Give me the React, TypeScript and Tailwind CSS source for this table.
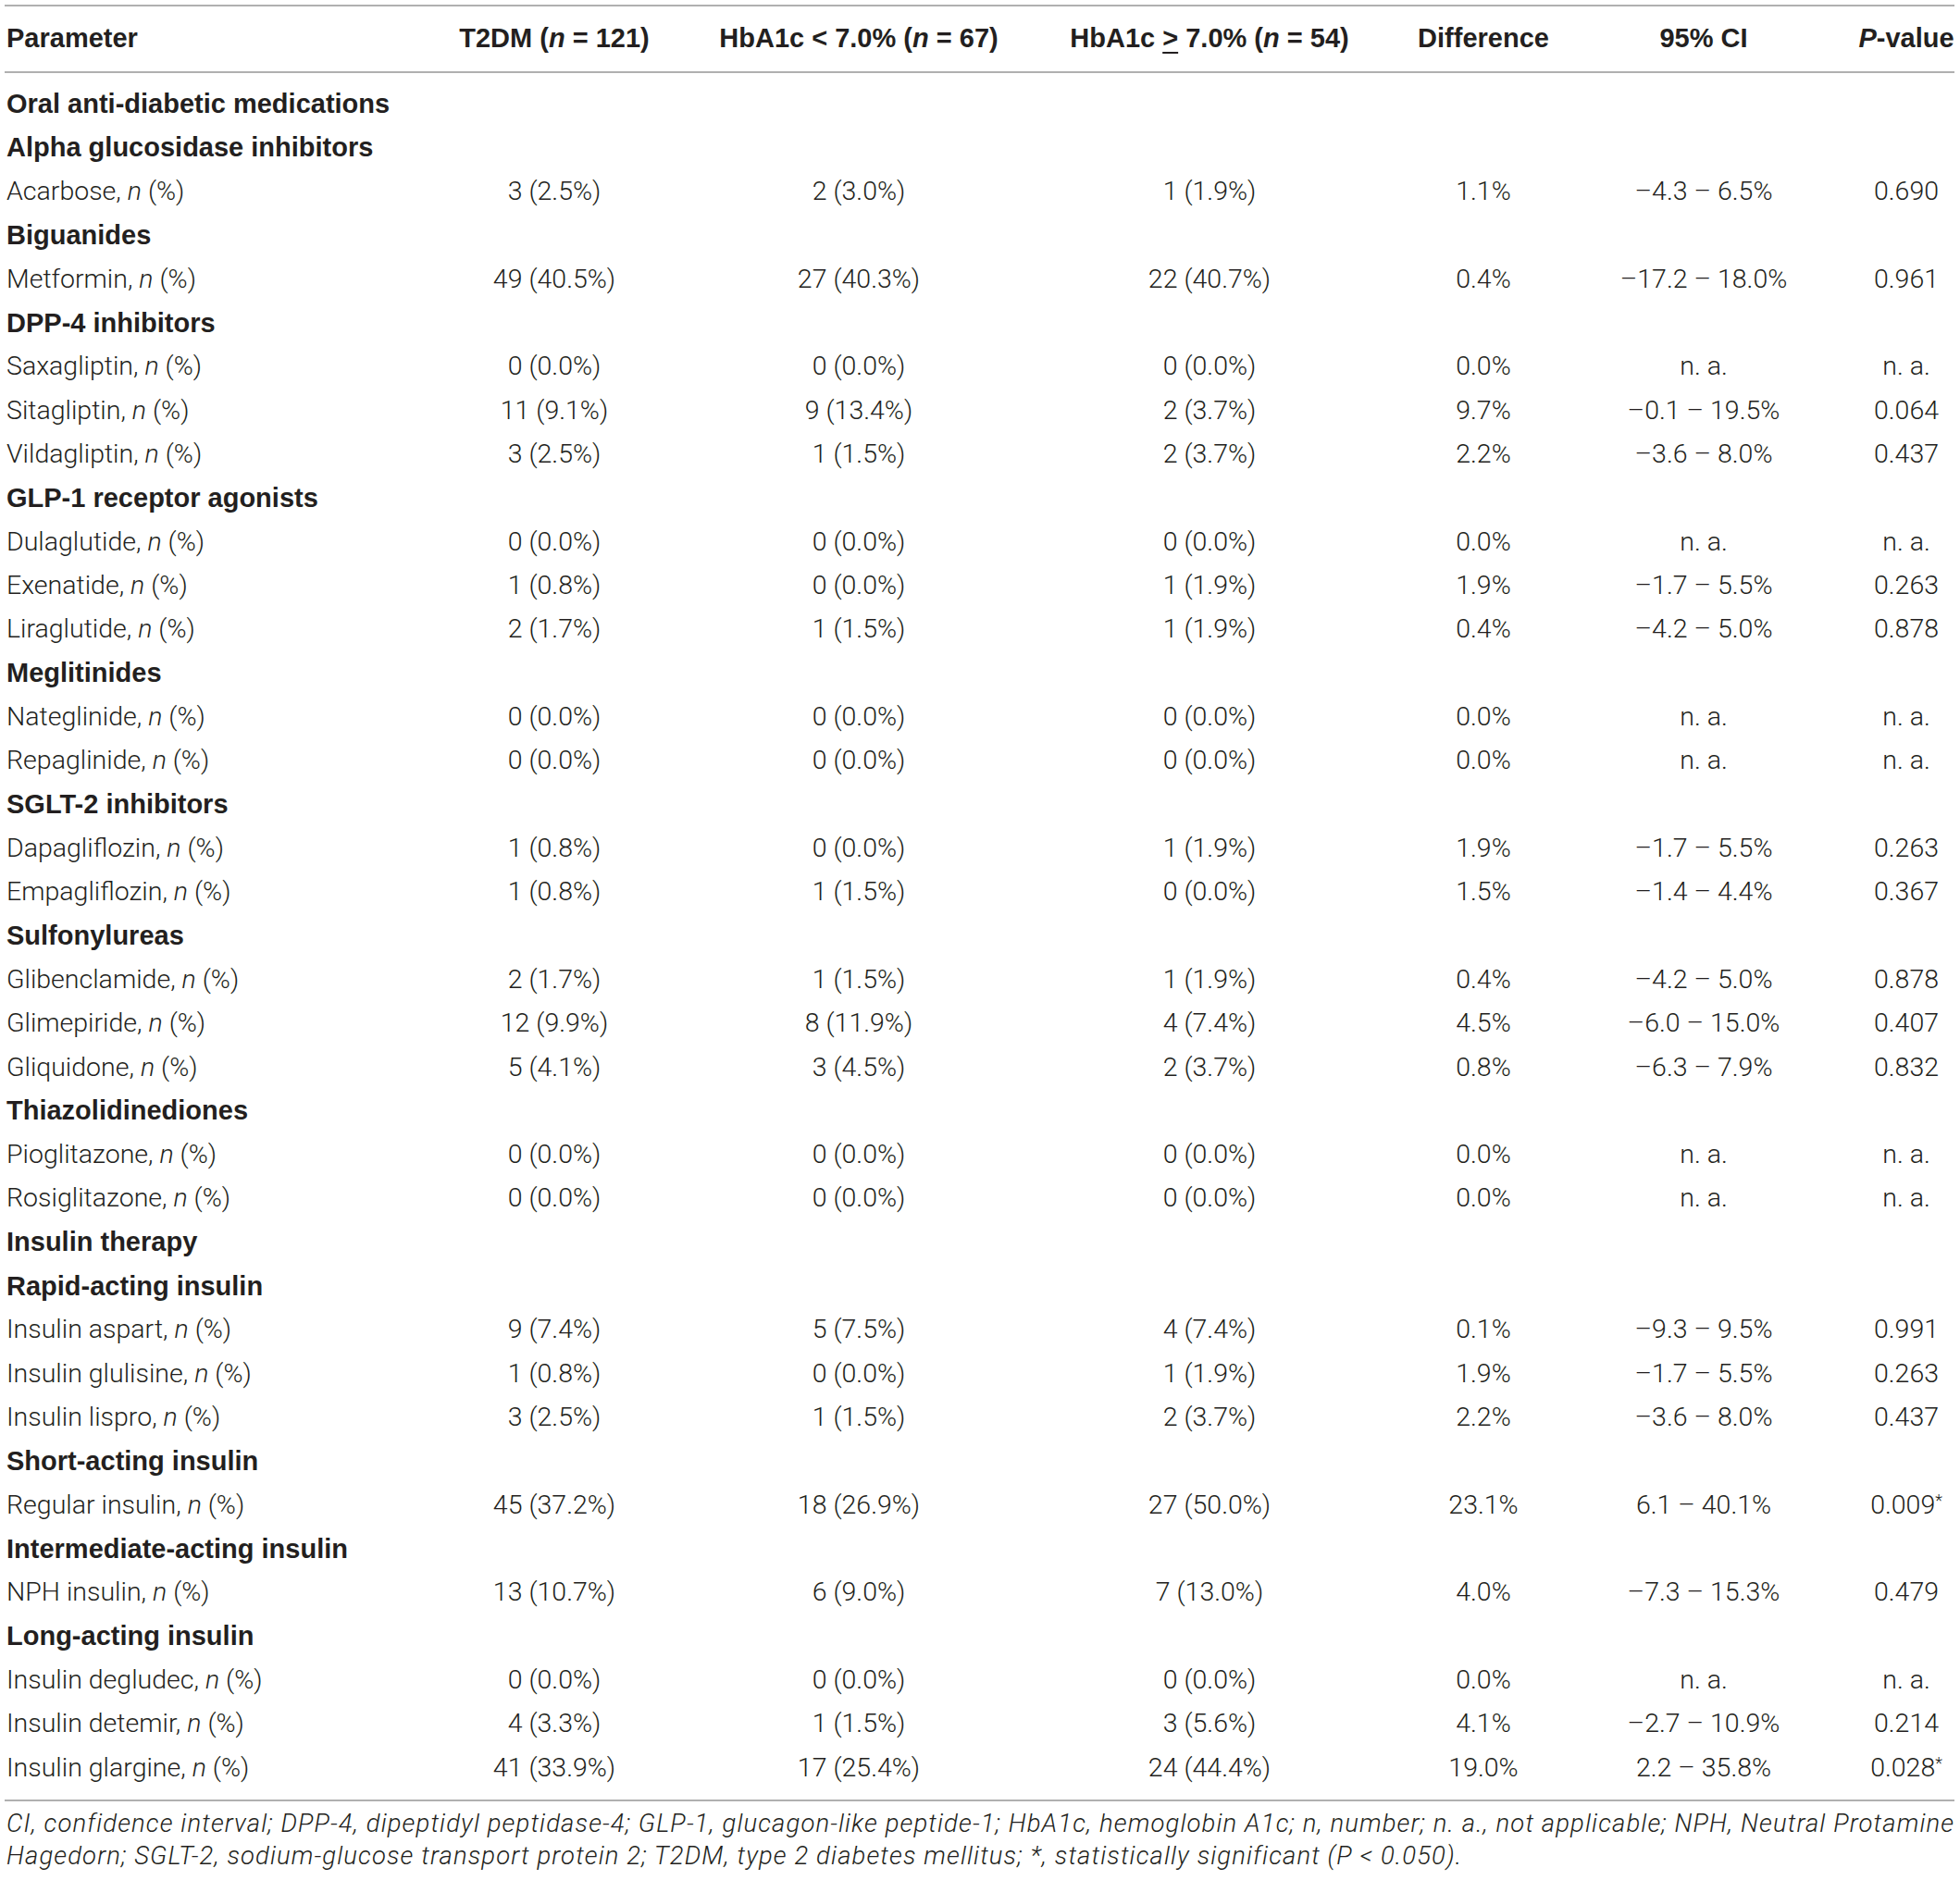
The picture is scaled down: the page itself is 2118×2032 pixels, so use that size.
import { Fragment } from "react";

type DataRow = {
  kind: "data";
  label: string;
  all: string;
  low: string;
  high: string;
  diff: string;
  ci: string;
  p: string;
  sig?: boolean;
};

type HeadRow = { kind: "head"; label: string };

type Row = DataRow | HeadRow;

const NA = { all: "0 (0.0%)", low: "0 (0.0%)", high: "0 (0.0%)", diff: "0.0%", ci: "n. a.", p: "n. a." };

const d = (label: string, all: string, low: string, high: string, diff: string, ci: string, p: string, sig = false): DataRow => ({
  kind: "data",
  label,
  all,
  low,
  high,
  diff,
  ci,
  p,
  sig,
});

const h = (label: string): HeadRow => ({ kind: "head", label });

const z = (label: string): DataRow => ({ kind: "data", label, ...NA });

const ROWS: Row[] = [
  h("Oral anti-diabetic medications"),
  h("Alpha glucosidase inhibitors"),
  d("Acarbose", "3 (2.5%)", "2 (3.0%)", "1 (1.9%)", "1.1%", "–4.3 – 6.5%", "0.690"),
  h("Biguanides"),
  d("Metformin", "49 (40.5%)", "27 (40.3%)", "22 (40.7%)", "0.4%", "–17.2 – 18.0%", "0.961"),
  h("DPP-4 inhibitors"),
  z("Saxagliptin"),
  d("Sitagliptin", "11 (9.1%)", "9 (13.4%)", "2 (3.7%)", "9.7%", "–0.1 – 19.5%", "0.064"),
  d("Vildagliptin", "3 (2.5%)", "1 (1.5%)", "2 (3.7%)", "2.2%", "–3.6 – 8.0%", "0.437"),
  h("GLP-1 receptor agonists"),
  z("Dulaglutide"),
  d("Exenatide", "1 (0.8%)", "0 (0.0%)", "1 (1.9%)", "1.9%", "–1.7 – 5.5%", "0.263"),
  d("Liraglutide", "2 (1.7%)", "1 (1.5%)", "1 (1.9%)", "0.4%", "–4.2 – 5.0%", "0.878"),
  h("Meglitinides"),
  z("Nateglinide"),
  z("Repaglinide"),
  h("SGLT-2 inhibitors"),
  d("Dapagliflozin", "1 (0.8%)", "0 (0.0%)", "1 (1.9%)", "1.9%", "–1.7 – 5.5%", "0.263"),
  d("Empagliflozin", "1 (0.8%)", "1 (1.5%)", "0 (0.0%)", "1.5%", "–1.4 – 4.4%", "0.367"),
  h("Sulfonylureas"),
  d("Glibenclamide", "2 (1.7%)", "1 (1.5%)", "1 (1.9%)", "0.4%", "–4.2 – 5.0%", "0.878"),
  d("Glimepiride", "12 (9.9%)", "8 (11.9%)", "4 (7.4%)", "4.5%", "–6.0 – 15.0%", "0.407"),
  d("Gliquidone", "5 (4.1%)", "3 (4.5%)", "2 (3.7%)", "0.8%", "–6.3 – 7.9%", "0.832"),
  h("Thiazolidinediones"),
  z("Pioglitazone"),
  z("Rosiglitazone"),
  h("Insulin therapy"),
  h("Rapid-acting insulin"),
  d("Insulin aspart", "9 (7.4%)", "5 (7.5%)", "4 (7.4%)", "0.1%", "–9.3 – 9.5%", "0.991"),
  d("Insulin glulisine", "1 (0.8%)", "0 (0.0%)", "1 (1.9%)", "1.9%", "–1.7 – 5.5%", "0.263"),
  d("Insulin lispro", "3 (2.5%)", "1 (1.5%)", "2 (3.7%)", "2.2%", "–3.6 – 8.0%", "0.437"),
  h("Short-acting insulin"),
  d("Regular insulin", "45 (37.2%)", "18 (26.9%)", "27 (50.0%)", "23.1%", "6.1 – 40.1%", "0.009", true),
  h("Intermediate-acting insulin"),
  d("NPH insulin", "13 (10.7%)", "6 (9.0%)", "7 (13.0%)", "4.0%", "–7.3 – 15.3%", "0.479"),
  h("Long-acting insulin"),
  z("Insulin degludec"),
  d("Insulin detemir", "4 (3.3%)", "1 (1.5%)", "3 (5.6%)", "4.1%", "–2.7 – 10.9%", "0.214"),
  d("Insulin glargine", "41 (33.9%)", "17 (25.4%)", "24 (44.4%)", "19.0%", "2.2 – 35.8%", "0.028", true),
];

const GRID = "grid grid-cols-[417px_280px_378px_380px_212px_264px_174px] pl-[2px]";
const NUM = "pl-[70px] text-center whitespace-nowrap";

export default function App() {
  return (
    <div className="min-h-screen bg-white text-[#231f20]">
      <div className="ml-[5px] w-[2107px] pt-[5px]">
        <div className="h-[2px] bg-[#b0b0b0]" />

        {/* header */}
        <div
          className={`${GRID} h-[70px] items-center text-[29px] font-bold`}
          style={{ fontFamily: '"Liberation Sans", Arial, sans-serif' }}
        >
          <div>Parameter</div>
          <div className={NUM}>
            T2DM (<i>n</i> = 121)
          </div>
          <div className={NUM}>
            HbA1c &lt; 7.0% (<i>n</i> = 67)
          </div>
          <div className={NUM}>
            HbA1c <span className="underline underline-offset-[5px] decoration-2">&gt;</span> 7.0% (<i>n</i> = 54)
          </div>
          <div className={NUM}>Difference</div>
          <div className={NUM}>95% CI</div>
          <div className={NUM}>
            <i>P</i>-value
          </div>
        </div>

        <div className="h-[2px] bg-[#b0b0b0]" />

        {/* body */}
        <div className="pt-[10px] pb-[10px]">
          {ROWS.map((row, i) =>
            row.kind === "head" ? (
              <div
                key={i}
                className={`${GRID} h-[47.33px] items-center text-[29px] font-bold whitespace-nowrap`}
                style={{ fontFamily: '"Liberation Sans", Arial, sans-serif' }}
              >
                <div className="col-span-7">{row.label}</div>
              </div>
            ) : (
              <div
                key={i}
                className={`${GRID} h-[47.33px] items-center text-[28.5px] font-light`}
                style={{ fontFamily: 'Roboto, "Liberation Sans", sans-serif' }}
              >
                <div className="whitespace-nowrap">
                  {row.label}, <i>n</i> (%)
                </div>
                <div className={NUM}>{row.all}</div>
                <div className={NUM}>{row.low}</div>
                <div className={NUM}>{row.high}</div>
                <div className={NUM}>{row.diff}</div>
                <div className={NUM}>{row.ci}</div>
                <div className={NUM}>
                  {row.p}
                  {row.sig && <span className="relative -top-[8px] text-[18px]">*</span>}
                </div>
              </div>
            )
          )}
        </div>

        <div className="h-[2px] bg-[#b0b0b0]" />

        {/* footnote */}
        <p
          className="pl-[2px] pt-[6px] text-[27.5px] leading-[35px] tracking-[1.1px] italic font-light whitespace-nowrap"
          style={{ fontFamily: 'Roboto, "Liberation Sans", sans-serif' }}
        >
          CI, confidence interval; DPP-4, dipeptidyl peptidase-4; GLP-1, glucagon-like peptide-1; HbA1c, hemoglobin A1c; n, number; n. a., not applicable; NPH, Neutral Protamine
          <br />
          Hagedorn; SGLT-2, sodium-glucose transport protein 2; T2DM, type 2 diabetes mellitus; *, statistically significant (P &lt; 0.050).
        </p>
      </div>
    </div>
  );
}
